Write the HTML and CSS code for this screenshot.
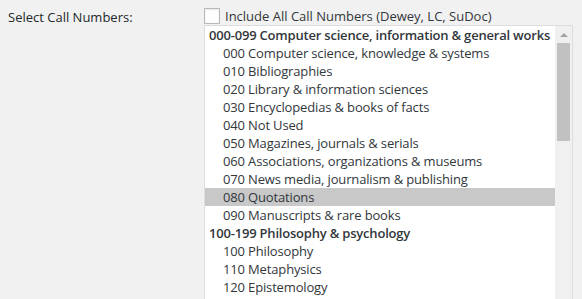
FILE: index.html
```html
<!DOCTYPE html>
<html>
<head>
<meta charset="utf-8">
<link rel="stylesheet" href="styles.css">
</head>
<body>
<div class="row">
  <div class="label">Select Call Numbers:</div>
  <div class="field">
    <label class="check"><span class="box"></span><span>Include All Call Numbers (Dewey, LC, SuDoc)</span></label>
    <div class="select">
      <div class="list">
        <div class="group">000-099 Computer science, information &amp; general works</div>
        <div class="opt">000 Computer science, knowledge &amp; systems</div>
        <div class="opt">010 Bibliographies</div>
        <div class="opt">020 Library &amp; information sciences</div>
        <div class="opt">030 Encyclopedias &amp; books of facts</div>
        <div class="opt">040 Not Used</div>
        <div class="opt">050 Magazines, journals &amp; serials</div>
        <div class="opt">060 Associations, organizations &amp; museums</div>
        <div class="opt">070 News media, journalism &amp; publishing</div>
        <div class="opt sel">080 Quotations</div>
        <div class="opt">090 Manuscripts &amp; rare books</div>
        <div class="group">100-199 Philosophy &amp; psychology</div>
        <div class="opt">100 Philosophy</div>
        <div class="opt">110 Metaphysics</div>
        <div class="opt">120 Epistemology</div>
      </div>
      <div class="scroll">
        <div class="arrow"></div>
        <div class="thumb"></div>
      </div>
    </div>
  </div>
</div>
</body>
</html>
```
FILE: styles.css
```css
html, body {
  margin: 0;
  padding: 0;
  background: #f1f1f1;
  font-family: "Open Sans", sans-serif;
  color: #32373c;
  height: 299px;
  overflow: hidden;
}
.row {
  display: flex;
  padding: 6px 0 0 8px;
}
.label {
  width: 196px;
  font-size: 13px;
  color: #23282d;
  line-height: 18px;
  padding-top: 2px;
}
.field {
  display: flex;
  flex-direction: column;
}
.check {
  display: flex;
  align-items: center;
  gap: 5px;
  font-size: 13px;
  line-height: 18px;
  height: 19px;
}
.box {
  width: 14px;
  height: 14px;
  border: 1px solid #b4b9be;
  background: #fff;
  box-shadow: inset 0 1px 2px rgba(0,0,0,0.1);
}
.select {
  display: flex;
  width: 367px;
  height: 300px;
  border: 1px solid #ddd;
  background: #fff;
}
.list {
  flex: 1;
  padding-top: 0;
  font-size: 13px;
  line-height: 18px;
  white-space: nowrap;
  overflow: hidden;
}
.group {
  font-weight: 600;
  padding-left: 4px;
  height: 18px;
  letter-spacing: -0.2px;
}
.opt {
  padding-left: 18px;
  height: 18px;
  letter-spacing: -0.15px;
}
.opt.sel {
  background: #c8c8c8;
}
.scroll {
  width: 17px;
  background: #f0f0f0;
}
.arrow {
  margin: 7px auto 0;
  width: 0;
  height: 0;
  border-left: 4px solid transparent;
  border-right: 4px solid transparent;
  border-bottom: 4px solid #a3a3a3;
}
.thumb {
  margin: 6px 2px 0;
  height: 98px;
  background: #c1c1c1;
}
```
